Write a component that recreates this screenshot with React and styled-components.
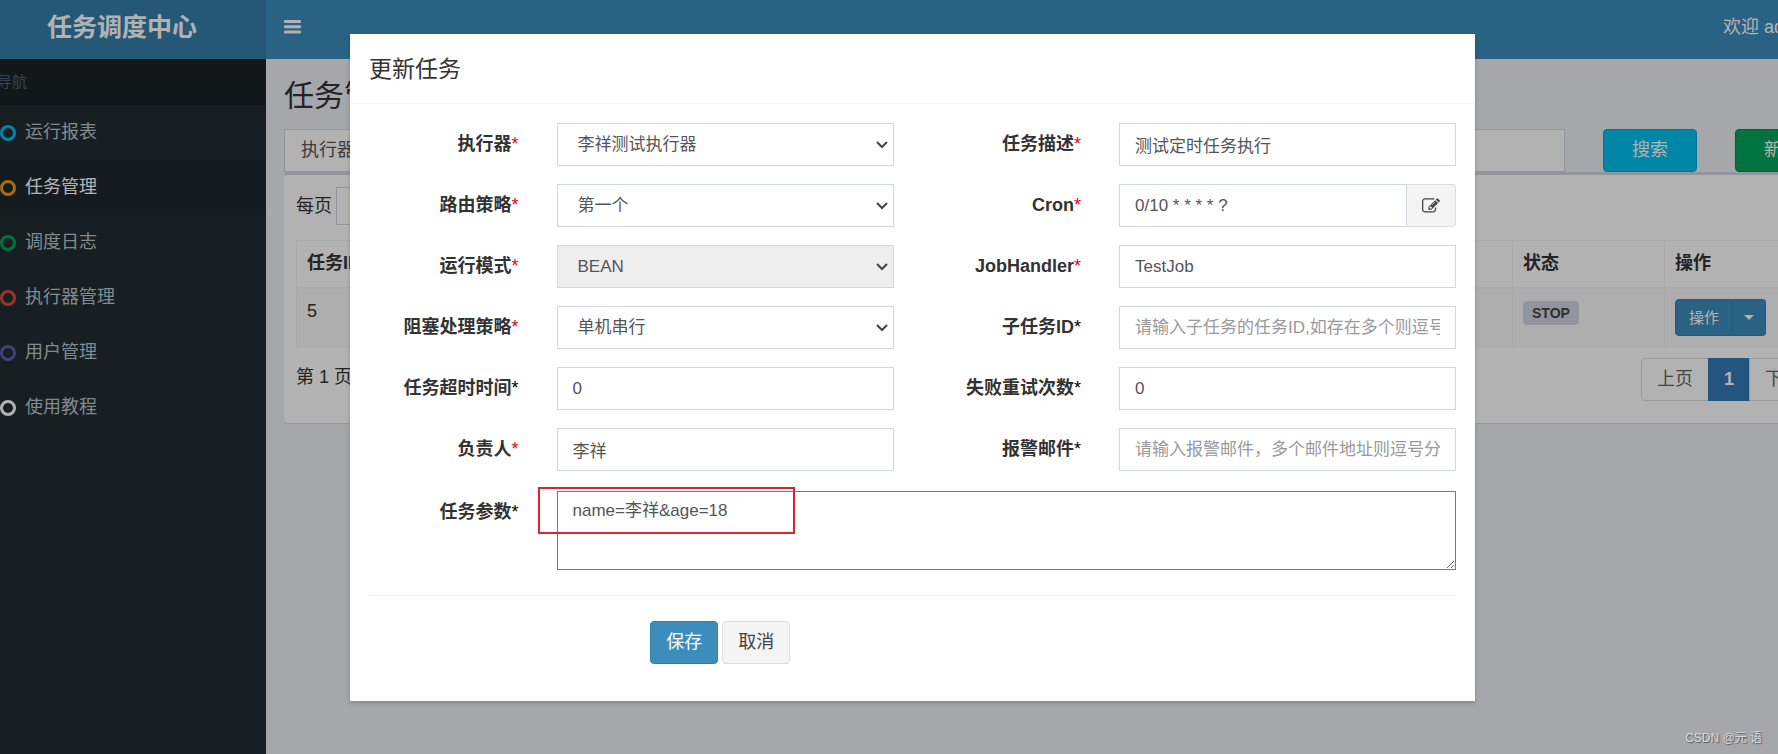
import React from "react";
import styled, { createGlobalStyle } from "styled-components";

const GlobalStyle = createGlobalStyle`
  *, *::before, *::after { box-sizing: border-box; }
  body {
    margin: 0;
    overflow: hidden;
    color: #333;
    font: 18px/25px "Liberation Sans", "Noto Sans CJK SC", sans-serif;
  }
  button, input, select, textarea { font: inherit; }
  a { color: inherit; text-decoration: none; }
`;

const Viewport = styled.div`
  position: relative;
  overflow: hidden;
`;

const Shell = styled.div`
  position: relative;
  display: flex;
  flex-direction: column;
  width: calc(100% + 91px);
  min-height: 100vh;
  margin-left: -22px;
  background: #ecf0f5;
`;

/* ---------- top bar ---------- */

const TopBar = styled.header`
  display: flex;
  height: 59px;
  color: #fff;
`;

const Logo = styled.a`
  flex: 0 0 288px;
  background: #367fa9;
  font-size: 25px;
  font-weight: bold;
  line-height: 54px;
  text-align: center;
`;

const NavBar = styled.nav`
  flex: 1;
  display: flex;
  justify-content: space-between;
  align-items: center;
  padding: 0 19px 5px 18px;
  background: #3c8dbc;
`;

const IconButton = styled.button`
  display: flex;
  padding: 0;
  border: 0;
  background: none;
  color: inherit;
`;

const UserLink = styled.a`
  display: flex;
  align-items: center;
  gap: 5px;
`;

const Caret = styled.span`
  border: 5px solid transparent;
  border-top-color: currentColor;
  border-bottom: 0;
`;

/* ---------- sidebar ---------- */

const Main = styled.div`
  flex: 1;
  display: flex;
`;

const Sidebar = styled.aside`
  flex: 0 0 288px;
  background: #222d32;
`;

const SidebarHeading = styled.div`
  padding: 0 19px;
  background: #1a2226;
  color: #4b646f;
  font-size: 15px;
  line-height: 46px;
`;

const MenuLink = styled.a`
  display: flex;
  align-items: center;
  gap: 9px;
  height: 55px;
  padding-left: 18px;
  border-left: 4px solid ${(p) => (p.$active ? "#3c8dbc" : "transparent")};
  background: ${(p) => (p.$active ? "#1e282c" : "transparent")};
  color: ${(p) => (p.$active ? "#fff" : "#b8c7ce")};
`;

const Ring = styled.span`
  width: 16px;
  height: 16px;
  border: 3px solid ${(p) => p.$color};
  border-radius: 50%;
`;

/* ---------- page behind the dialog ---------- */

const Content = styled.main`
  flex: 1;
  min-width: 0;
  padding: 17px 18px 0 18px;
`;

const PageTitle = styled.h1`
  margin: 0 0 13px;
  font-size: 30px;
  font-weight: normal;
  line-height: 40px;
`;

const FilterRow = styled.div`
  display: grid;
  grid-template-columns: repeat(12, minmax(0, 1fr));
  column-gap: 38px;
`;

const Group = styled.div`
  grid-column: span ${(p) => p.$span};
  display: flex;
`;

const Addon = styled.label`
  padding: 8px 16px;
  border: 1px solid #d2d6de;
  border-right: 0;
  background: #fff;
  color: #555;
  white-space: nowrap;
`;

const Input = styled.input`
  flex: 1;
  width: 100%;
  min-width: 0;
  height: 43px;
  padding: 0 15px;
  border: 1px solid #d2d6de;
  border-radius: 0;
  outline: 0;
  background: #fff;
  color: #555;
  font-size: 17px;
  &::placeholder { color: #999; opacity: 1; }
`;

const tones = {
  info: ["#00c0ef", "#00acd6", "#fff"],
  success: ["#00a65a", "#008d4c", "#fff"],
  primary: ["#3c8dbc", "#367fa9", "#fff"],
  plain: ["#f4f4f4", "#ddd", "#444"],
};

const Button = styled.button`
  height: 43px;
  padding: 0 15px;
  border: 1px solid ${(p) => tones[p.$tone][1]};
  border-radius: 4px;
  background: ${(p) => tones[p.$tone][0]};
  color: ${(p) => tones[p.$tone][2]};
  white-space: nowrap;
`;

const Box = styled.section`
  padding: 12px 12px 22px;
  border-top: 3px solid #d2d6de;
  border-radius: 4px;
  background: #fff;
  box-shadow: 0 1px 1px rgba(0, 0, 0, 0.1);
`;

const LengthLabel = styled.label`
  display: flex;
  align-items: center;
  gap: 4px;
  margin-bottom: 15px;
`;

const LengthSelect = styled.select`
  width: 94px;
  height: 38px;
  border: 1px solid #d2d6de;
  background: #fff;
`;

const Table = styled.table`
  width: 100%;
  table-layout: fixed;
  border: 1px solid #f4f4f4;
  border-collapse: collapse;
  th, td {
    padding: 10px;
    border: 1px solid #f4f4f4;
    text-align: left;
    vertical-align: top;
  }
  th { height: 47px; border-bottom-width: 2px; }
  td { height: 60px; background: #f9f9f9; }
`;

const Column = styled.col`
  width: ${(p) => p.$width};
`;

const StatusLabel = styled.span`
  display: inline-block;
  margin-top: 2px;
  padding: 0 9px;
  border-radius: 4px;
  background: #d2d6de;
  color: #444;
  font-size: 14px;
  font-weight: bold;
  line-height: 24px;
`;

const SplitButton = styled.div`
  display: flex;
`;

const SmallButton = styled.button`
  display: flex;
  align-items: center;
  height: 37px;
  padding: 0 ${(p) => (p.$toggle ? 11 : 13)}px;
  border: 1px solid #367fa9;
  border-left-width: ${(p) => (p.$toggle ? 0 : 1)}px;
  border-radius: ${(p) => (p.$toggle ? "0 4px 4px 0" : "4px 0 0 4px")};
  background: #3c8dbc;
  color: #fff;
  font-size: 15px;
`;

const TableFooter = styled.div`
  display: flex;
  justify-content: space-between;
  align-items: flex-start;
  padding-top: 10px;
`;

const PageInfo = styled.span`
  padding-top: 7px;
`;

const Pagination = styled.div`
  display: flex;
`;

const PageLink = styled.a`
  margin-left: -1px;
  padding: 8px 15px;
  border: 1px solid ${(p) => (p.$active ? "#337ab7" : "#ddd")};
  border-radius: ${(p) => p.$radius || 0};
  background: ${(p) => (p.$active ? "#337ab7" : "#fff")};
  color: ${(p) => (p.$active ? "#fff" : "#666")};
  font-weight: ${(p) => (p.$active ? "bold" : "normal")};
`;

/* ---------- dialog ---------- */

const Backdrop = styled.div`
  position: absolute;
  inset: 0;
  display: flex;
  justify-content: center;
  align-items: flex-start;
  padding-top: 34px;
  background: rgba(0, 0, 0, 0.3);
`;

const Dialog = styled.div`
  width: 100%;
  max-width: 1125px;
  background: #fff;
  box-shadow: 0 2px 4px rgba(0, 0, 0, 0.2);
`;

const DialogHeader = styled.div`
  padding: 20px 19px 18px;
  border-bottom: 1px solid #f4f4f4;
`;

const DialogTitle = styled.h4`
  margin: 0;
  font-size: 23px;
  font-weight: normal;
  line-height: 31px;
`;

const Form = styled.form`
  padding: 19px 0 37px;
`;

const FieldGrid = styled.div`
  display: grid;
  grid-template-columns: 1fr 2fr 1fr 2fr;
  row-gap: 18px;
`;

const ParamRow = styled.div`
  display: grid;
  grid-template-columns: 1fr 5fr;
  margin-top: 20px;
`;

const Label = styled.label`
  padding: 9px 19px;
  font-weight: bold;
  text-align: right;
`;

const Star = styled.span`
  color: ${(p) => (p.$required ? "#e60012" : "#000")};
  font-weight: normal;
`;

const Cell = styled.div`
  position: relative;
  display: flex;
  min-width: 0;
  padding: 0 19px;
`;

const Select = styled.select`
  width: 100%;
  height: 43px;
  padding: 0 20px;
  border: 1px solid #d2d6de;
  border-radius: 0;
  outline: 0;
  appearance: none;
  background: ${(p) => (p.disabled ? "#eee" : "#fff")};
  color: #555;
  font-size: 17px;
  opacity: 1;
`;

const Chevron = styled.svg`
  position: absolute;
  top: 18px;
  right: 25px;
  pointer-events: none;
`;

const EditButton = styled.button`
  display: flex;
  flex: 0 0 49px;
  align-items: center;
  justify-content: center;
  padding: 0;
  border: 1px solid #ddd;
  border-left: 0;
  border-radius: 0 4px 4px 0;
  background: #f4f4f4;
  color: #444;
`;

const TextArea = styled.textarea`
  width: 100%;
  height: 79px;
  padding: 6px 15px;
  border: 1px solid #3c8dbc;
  border-radius: 0;
  outline: 0;
  color: #555;
  font-size: 17px;
  resize: vertical;
`;

const Highlight = styled.div`
  position: absolute;
  top: -4px;
  left: 0;
  width: 257px;
  height: 47px;
  border: 2px solid #d9262c;
  pointer-events: none;
`;

const Divider = styled.hr`
  margin: 25px 19px;
  border: 0;
  border-top: 1px solid #eee;
`;

const Actions = styled.div`
  display: flex;
  gap: 4px;
  padding-left: calc(25% + 19px);
`;

const Watermark = styled.div`
  position: absolute;
  right: 16px;
  bottom: 6px;
  color: #d8dadc;
  font-size: 12px;
  line-height: 20px;
  text-shadow: 1px 1px 1px #555;
`;

const menu = [
  ["运行报表", "#00c0ef"],
  ["任务管理", "#f39c12"],
  ["调度日志", "#00a65a"],
  ["执行器管理", "#dd4b39"],
  ["用户管理", "#605ca8"],
  ["使用教程", "#fff"],
];

const fields = [
  { id: "group", label: "执行器", required: true, kind: "select", value: "李祥测试执行器" },
  { id: "desc", label: "任务描述", required: true, value: "测试定时任务执行" },
  { id: "route", label: "路由策略", required: true, kind: "select", value: "第一个" },
  { id: "cron", label: "Cron", required: true, kind: "cron", value: "0/10 * * * * ?" },
  { id: "mode", label: "运行模式", required: true, kind: "select", value: "BEAN", disabled: true },
  { id: "handler", label: "JobHandler", required: true, value: "TestJob" },
  { id: "block", label: "阻塞处理策略", required: true, kind: "select", value: "单机串行" },
  { id: "child", label: "子任务ID", placeholder: "请输入子任务的任务ID,如存在多个则逗号分隔" },
  { id: "timeout", label: "任务超时时间", value: "0" },
  { id: "retry", label: "失败重试次数", value: "0" },
  { id: "owner", label: "负责人", required: true, value: "李祥" },
  { id: "mail", label: "报警邮件", placeholder: "请输入报警邮件，多个邮件地址则逗号分隔" },
];

function BarsIcon() {
  return (
    <svg width="17" height="14" viewBox="0 0 17 14" fill="currentColor" aria-hidden="true">
      <rect width="17" height="3" rx="1" />
      <rect y="5.3" width="17" height="3" rx="1" />
      <rect y="10.6" width="17" height="3" rx="1" />
    </svg>
  );
}

function EditIcon() {
  return (
    <svg width="18" height="18" viewBox="0 0 1792 1792" fill="currentColor" aria-hidden="true">
      <path d="M888 1184l116-116-152-152-116 116v56h96v96h56zm440-720q-16-16-33 1l-350 350q-17 17-1 33t33-1l350-350q17-17 1-33zm80 594v190q0 119-84.5 203.5t-203.5 84.5h-832q-119 0-203.5-84.5t-84.5-203.5v-832q0-119 84.5-203.5t203.5-84.5h832q63 0 117 25 15 7 18 23 3 17-9 29l-49 49q-14 14-32 8-23-6-45-6h-832q-66 0-113 47t-47 113v832q0 66 47 113t113 47h832q66 0 113-47t47-113v-126q0-13 9-22l64-64q15-15 35-7t20 29zm-96-738l288 288-672 672h-288v-288zm444 132l-92 92-288-288 92-92q28-28 68-28t68 28l152 152q28 28 28 68t-28 68z" />
    </svg>
  );
}

function Control({ field }) {
  if (field.kind === "select") {
    return (
      <>
        <Select id={field.id} disabled={field.disabled}>
          <option>{field.value}</option>
        </Select>
        <Chevron width="12" height="8" viewBox="0 0 12 8" fill="none" stroke="#444" strokeWidth="2">
          <path d="M1 1l5 5 5-5" />
        </Chevron>
      </>
    );
  }
  const input = (
    <Input id={field.id} defaultValue={field.value} placeholder={field.placeholder} />
  );
  if (field.kind === "cron") {
    return (
      <>
        {input}
        <EditButton type="button" aria-label="Cron">
          <EditIcon />
        </EditButton>
      </>
    );
  }
  return input;
}

function JobDialog() {
  return (
    <Dialog role="dialog" aria-labelledby="dialog-title">
      <DialogHeader>
        <DialogTitle id="dialog-title">更新任务</DialogTitle>
      </DialogHeader>
      <Form>
        <FieldGrid>
          {fields.map((field) => (
            <React.Fragment key={field.id}>
              <Label htmlFor={field.id}>
                {field.label}
                <Star $required={field.required}>*</Star>
              </Label>
              <Cell>
                <Control field={field} />
              </Cell>
            </React.Fragment>
          ))}
        </FieldGrid>
        <ParamRow>
          <Label htmlFor="param">
            任务参数<Star>*</Star>
          </Label>
          <Cell>
            <TextArea id="param" defaultValue="name=李祥&age=18" />
            <Highlight />
          </Cell>
        </ParamRow>
        <Divider />
        <Actions>
          <Button type="button" $tone="primary">保存</Button>
          <Button type="button" $tone="plain">取消</Button>
        </Actions>
      </Form>
    </Dialog>
  );
}

function JobPage() {
  return (
    <Content>
      <PageTitle>任务管理</PageTitle>
      <FilterRow>
        <Group $span={3}>
          <Addon htmlFor="filter-group">执行器</Addon>
          <Input id="filter-group" />
        </Group>
        <Group $span={1}><Input aria-label="状态" /></Group>
        <Group $span={2}><Input aria-label="任务描述" /></Group>
        <Group $span={2}><Input aria-label="JobHandler" /></Group>
        <Group $span={2}><Input aria-label="负责人" /></Group>
        <Button type="button" $tone="info">搜索</Button>
        <Button type="button" $tone="success">新增</Button>
      </FilterRow>
      <Box>
        <LengthLabel>
          每页
          <LengthSelect />
        </LengthLabel>
        <Table>
          <colgroup>
            <Column $width="10%" />
            <Column $width="auto" />
            <Column $width="10%" />
            <Column $width="10%" />
          </colgroup>
          <thead>
            <tr>
              <th>任务ID</th>
              <th />
              <th>状态</th>
              <th>操作</th>
            </tr>
          </thead>
          <tbody>
            <tr>
              <td>5</td>
              <td />
              <td><StatusLabel>STOP</StatusLabel></td>
              <td>
                <SplitButton>
                  <SmallButton type="button">操作</SmallButton>
                  <SmallButton type="button" $toggle aria-label="更多操作">
                    <Caret />
                  </SmallButton>
                </SplitButton>
              </td>
            </tr>
          </tbody>
        </Table>
        <TableFooter>
          <PageInfo>第 1 页</PageInfo>
          <Pagination>
            <PageLink href="#" $radius="4px 0 0 4px">上页</PageLink>
            <PageLink href="#" $active>1</PageLink>
            <PageLink href="#" $radius="0 4px 4px 0">下页</PageLink>
          </Pagination>
        </TableFooter>
      </Box>
    </Content>
  );
}

export default function App() {
  return (
    <Viewport>
      <GlobalStyle />
      <Shell>
        <TopBar>
          <Logo href="#">任务调度中心</Logo>
          <NavBar>
            <IconButton type="button" aria-label="导航">
              <BarsIcon />
            </IconButton>
            <UserLink href="#">
              欢迎 admin
              <Caret />
            </UserLink>
          </NavBar>
        </TopBar>
        <Main>
          <Sidebar>
            <SidebarHeading>导航</SidebarHeading>
            {menu.map(([label, color]) => (
              <MenuLink href="#" key={label} $active={label === "任务管理"}>
                <Ring $color={color} />
                {label}
              </MenuLink>
            ))}
          </Sidebar>
          <JobPage />
        </Main>
        <Backdrop>
          <JobDialog />
        </Backdrop>
      </Shell>
      <Watermark>CSDN @元 语</Watermark>
    </Viewport>
  );
}
